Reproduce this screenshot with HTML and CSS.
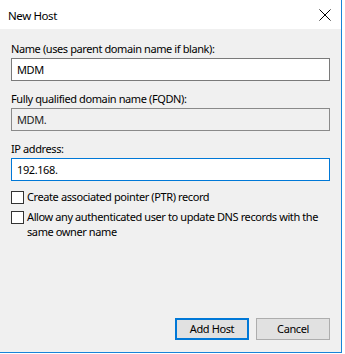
FILE: index.html
```html
<!DOCTYPE html>
<html lang="en">
<head>
  <meta charset="UTF-8">
  <title>New Host</title>
  <link rel="stylesheet" href="styles.css">
</head>
<body>
<div class="Dialog">
  <div class="Dialog__Title">
    <span class="Dialog__TitleText">New Host</span>
    <svg class="Dialog__Close" width="12" height="12" viewBox="0 0 12 12">
      <path d="M0.5 0.5 L11.5 11.5 M11.5 0.5 L0.5 11.5" stroke="#000" stroke-width="1" fill="none"/>
    </svg>
  </div>
  <div class="Dialog__Body">
    <div class="Field">
      <div class="Field__Label">Name (uses parent domain name if blank):</div>
      <div class="Field__Input">MDM</div>
    </div>
    <div class="Field">
      <div class="Field__Label">Fully qualified domain name (FQDN):</div>
      <div class="Field__Input Field__Input--ReadOnly">MDM.</div>
    </div>
    <div class="Field">
      <div class="Field__Label">IP address:</div>
      <div class="Field__Input Field__Input--Focused">192.168.</div>
    </div>
    <div class="Checks">
      <label class="Check">
        <span class="Check__Box"></span>
        <span class="Check__Text">Create associated pointer (PTR) record</span>
      </label>
      <label class="Check">
        <span class="Check__Box"></span>
        <span class="Check__Text">Allow any authenticated user to update DNS records with the same owner name</span>
      </label>
    </div>
    <div class="Buttons">
      <div class="Button Button--Default">Add Host</div>
      <div class="Button">Cancel</div>
    </div>
  </div>
</div>
</body>
</html>
```

FILE: styles.css
```css
html, body {
  margin: 0;
  padding: 0;
  background-color: #ffffff;
  font-family: "Noto Sans", "Liberation Sans", sans-serif;
  font-size: 11px;
  letter-spacing: -0.4px;
  color: #000000;
}

.Dialog {
  width: 341px;
  height: 352px;
  border-right: 1px solid #1883d7;
  border-bottom: 1px solid #1883d7;
  display: flex;
  flex-direction: column;
}

.Dialog__Title {
  height: 29px;
  background-color: #ffffff;
  display: flex;
  align-items: center;
  justify-content: space-between;
  padding: 0 10px 0 8px;
  font-size: 11.5px;
}

.Dialog__TitleText {
  line-height: 15px;
  margin-top: 1px;
}

.Dialog__Close {
  margin-top: 1px;
}

.Dialog__Body {
  flex: 1;
  background-color: #f0f0f0;
  padding: 12px 11px 12px 11px;
  display: flex;
  flex-direction: column;
}

.Field {
  margin-bottom: 10px;
}

.Field__Label {
  line-height: 15px;
  margin-bottom: 2px;
}

.Field__Input {
  height: 21px;
  line-height: 21px;
  border: 1px solid #7a7a7a;
  background-color: #ffffff;
  padding-left: 5px;
}

.Field__Input--ReadOnly {
  background-color: #f0f0f0;
  border-color: #8a8a8a;
  color: #1e1e1e;
}

.Field__Input--Focused {
  border-color: #0078d7;
}

.Checks {
  margin-top: -2px;
  display: flex;
  flex-direction: column;
  gap: 5px;
}

.Check {
  display: flex;
  align-items: flex-start;
  line-height: 15px;
}

.Check__Box {
  flex: none;
  width: 11px;
  height: 11px;
  border: 1px solid #333333;
  background-color: #ffffff;
  margin-top: 2px;
  margin-right: 3px;
}

.Check__Text {
  padding-right: 6px;
}

.Buttons {
  margin-top: auto;
  display: flex;
  justify-content: flex-end;
  gap: 7px;
}

.Button {
  width: 72px;
  height: 20px;
  line-height: 20px;
  text-align: center;
  background-color: #e1e1e1;
  border: 1px solid #adadad;
}

.Button--Default {
  width: 70px;
  height: 18px;
  line-height: 18px;
  border: 2px solid #0078d7;
}
```
